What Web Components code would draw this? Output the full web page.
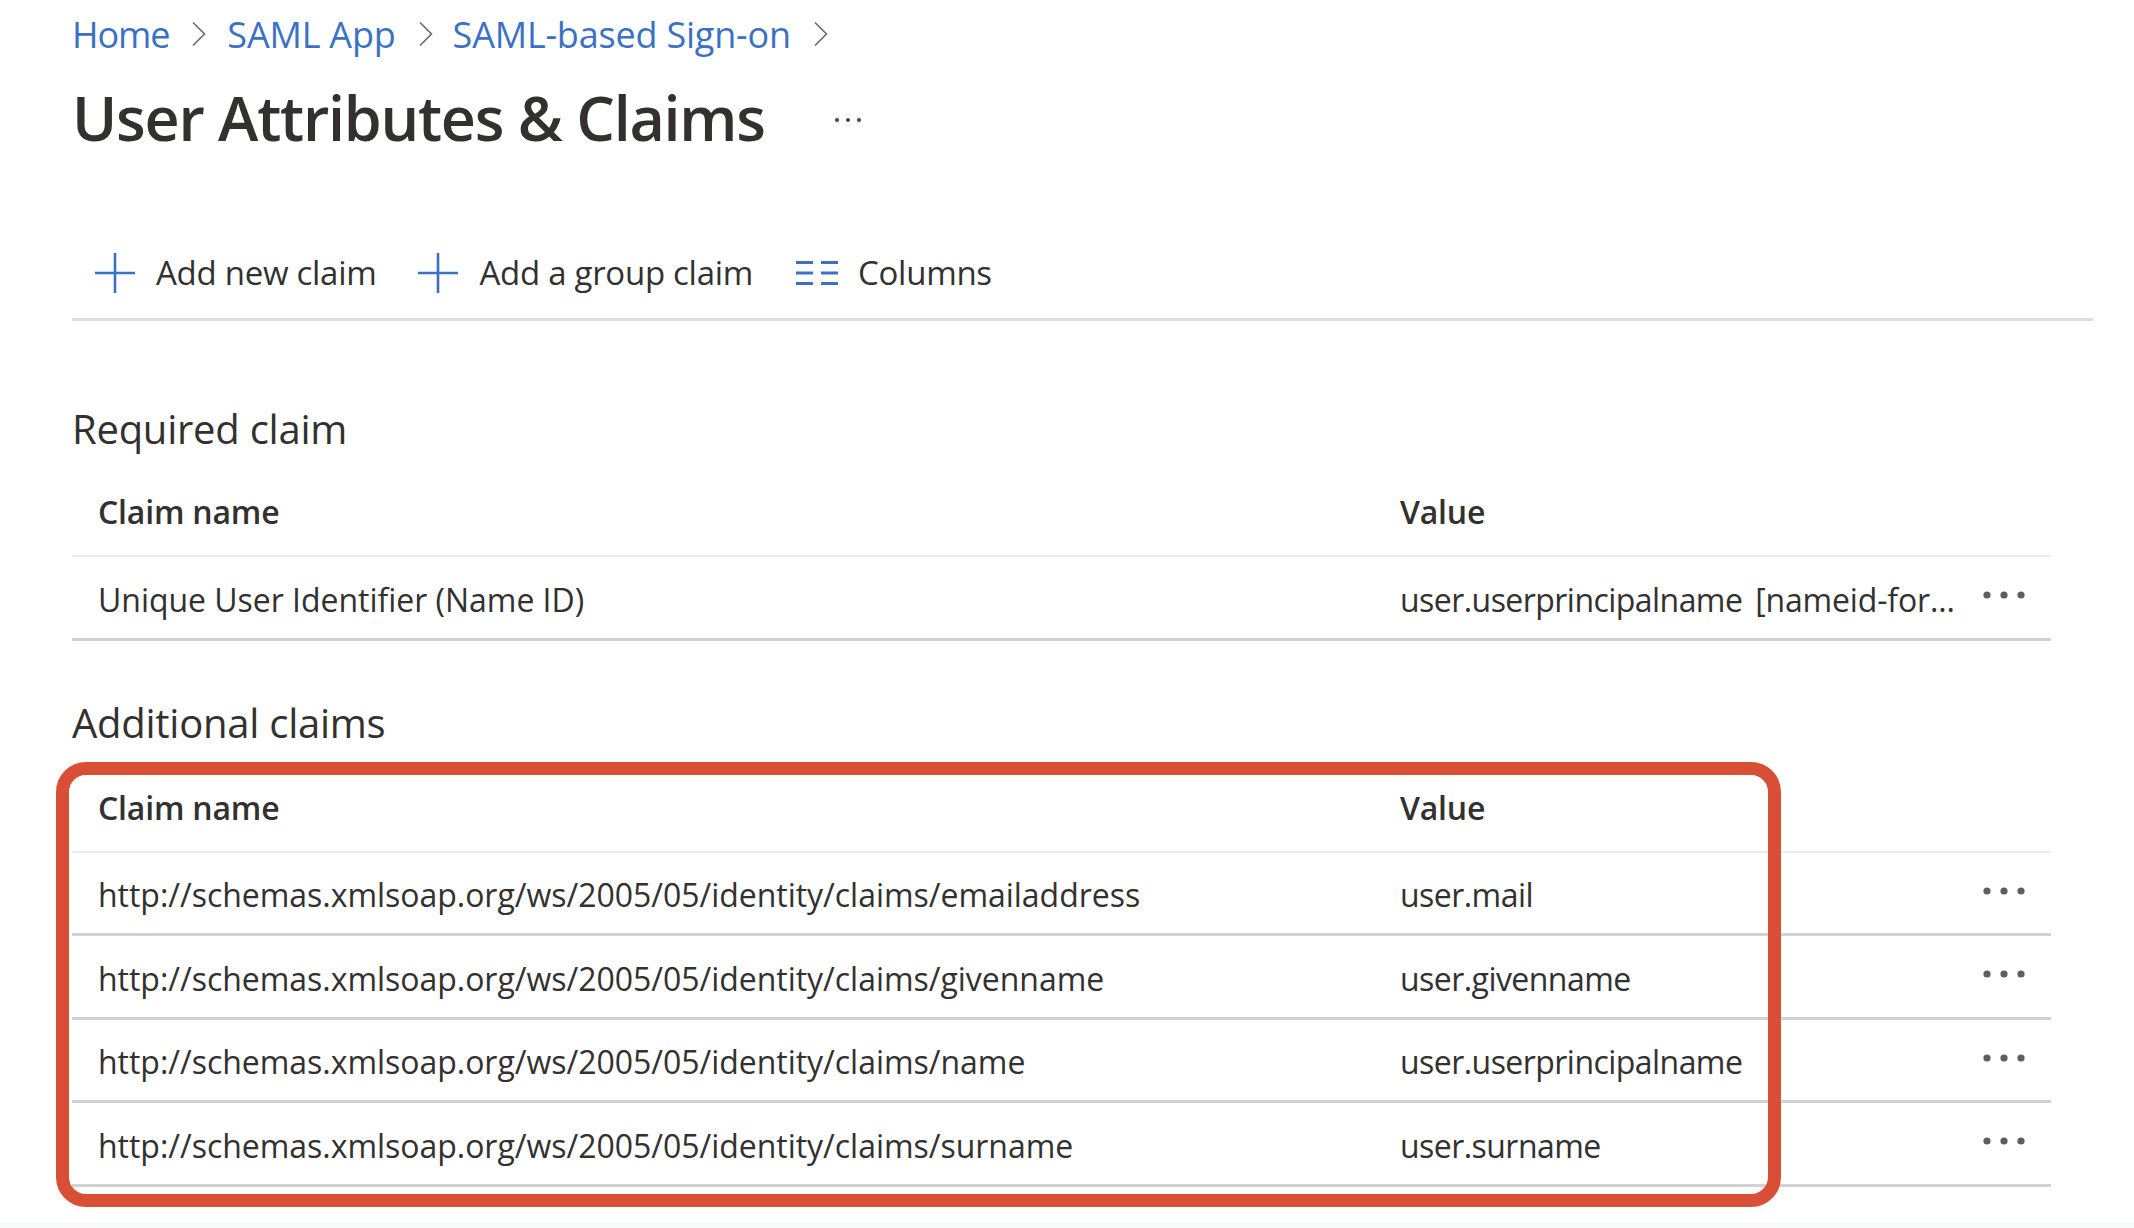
<!DOCTYPE html>
<html lang="en">
<head>
<meta charset="utf-8">
<title>User Attributes & Claims</title>
<style>
  html, body { margin: 0; height: 100%; background: #fff; }
  body { font-family: "Open Sans", "Liberation Sans", sans-serif; color: #323130; }
</style>
</head>
<body>
<claims-page>
  <crumb-trail>
    <crumb-link style="letter-spacing:-1.1px;margin-right:20px">Home</crumb-link>
    <crumb-link>SAML App</crumb-link>
    <crumb-link>SAML-based Sign-on</crumb-link>
  </crumb-trail>
  <page-title>User Attributes &amp; Claims</page-title>
  <tool-bar>
    <tool-button icon="plus" gap="21">Add new claim</tool-button>
    <tool-button icon="plus" gap="21">Add a group claim</tool-button>
    <tool-button icon="columns" gap="20" style="margin-left:1px">Columns</tool-button>
  </tool-bar>
  <section-heading style="height:151px;padding-bottom:18px">Required claim</section-heading>
  <claims-table>
    <claim-row name="Unique User Identifier (Name ID)" value="user.userprincipalname [nameid-for..."></claim-row>
  </claims-table>
  <section-heading style="height:127px;padding-bottom:20px">Additional claims</section-heading>
  <claims-table highlight>
    <claim-row name="http://schemas.xmlsoap.org/ws/2005/05/identity/claims/emailaddress" value="user.mail"></claim-row>
    <claim-row name="http://schemas.xmlsoap.org/ws/2005/05/identity/claims/givenname" value="user.givenname"></claim-row>
    <claim-row name="http://schemas.xmlsoap.org/ws/2005/05/identity/claims/name" value="user.userprincipalname"></claim-row>
    <claim-row name="http://schemas.xmlsoap.org/ws/2005/05/identity/claims/surname" value="user.surname"></claim-row>
  </claims-table>
</claims-page>

<script>
function shadow(el, html) {
  el.attachShadow({ mode: 'open' });
  el.shadowRoot.innerHTML = html;
}

class ClaimsPage extends HTMLElement {
  constructor() {
    super();
    shadow(this, `
      <style>
        :host { display: flex; flex-direction: column; height: 1228px; box-sizing: border-box; }
        main { flex: 1; padding-left: 72px; }
        footer { height: 6px; background: #f8f9fb; }
      </style>
      <main><slot></slot></main>
      <footer></footer>
    `);
  }
}

class CrumbTrail extends HTMLElement {
  constructor() {
    super();
    shadow(this, `
      <style>
        :host { display: flex; height: 68px; align-items: center; }
      </style>
      <slot></slot>
    `);
  }
}

class CrumbLink extends HTMLElement {
  constructor() {
    super();
    shadow(this, `
      <style>
        :host { display: flex; align-items: center; gap: 22px; margin-right: 19px; font-size: 36px; letter-spacing: -0.2px; color: #3a71c6; }
        svg { width: 16px; height: 26px; flex: none; }
      </style>
      <span><slot></slot></span>
      <svg viewBox="0 0 16 26"><path d="M2 1.5 L13.5 13 L2 24.5" fill="none" stroke="#6b6a69" stroke-width="1.6"/></svg>
    `);
  }
}

class PageTitle extends HTMLElement {
  constructor() {
    super();
    shadow(this, `
      <style>
        :host { display: flex; align-items: center; height: 104px; font-size: 61px; font-weight: 600; letter-spacing: -1.25px; color: #323130; }
        span { margin-top: -5px; }
        svg { width: 28px; height: 6px; margin-left: 69px; }
      </style>
      <span><slot></slot></span>
      <svg viewBox="0 0 28 6"><circle cx="3" cy="3" r="2" fill="#444"/><circle cx="14" cy="3" r="2" fill="#444"/><circle cx="25" cy="3" r="2" fill="#444"/></svg>
    `);
  }
}

class ToolBar extends HTMLElement {
  constructor() {
    super();
    shadow(this, `
      <style>
        :host { display: flex; align-items: center; gap: 42px; box-sizing: border-box; height: 149px; width: 2021px; padding: 55px 0 0 23px; border-bottom: 3px solid #dcdcdc; }
      </style>
      <slot></slot>
    `);
  }
}

const TOOL_ICONS = {
  plus: '<svg width="40" height="40" viewBox="0 0 40 40"><path d="M20 0V40M0 20H40" fill="none" stroke="#3a71c6" stroke-width="2.6"/></svg>',
  columns: '<svg width="42" height="24" viewBox="0 0 42 24"><path d="M0 1.5H17M25 1.5H42M0 12H17M25 12H42M0 22.5H17M25 22.5H42" fill="none" stroke="#3a71c6" stroke-width="2.8"/></svg>'
};

class ToolButton extends HTMLElement {
  constructor() {
    super();
    shadow(this, `
      <style>
        :host { display: flex; align-items: center; font-size: 33px; letter-spacing: -0.28px; color: #323130; }
        span { margin-left: var(--gap); }
        svg { display: block; flex: none; }
      </style>
      ${TOOL_ICONS[this.getAttribute('icon')]}
      <span style="--gap:${this.getAttribute('gap')}px"><slot></slot></span>
    `);
  }
}

class SectionHeading extends HTMLElement {
  constructor() {
    super();
    shadow(this, `
      <style>
        :host { display: flex; align-items: flex-end; box-sizing: border-box; font-size: 40px; letter-spacing: -0.25px; color: #323130; }
        span { display: block; line-height: 50px; height: 50px; }
      </style>
      <span><slot></slot></span>
    `);
  }
}

class ClaimsTable extends HTMLElement {
  constructor() {
    super();
    shadow(this, `
      <style>
        :host { display: block; position: relative; width: 1979px; }
        .head { display: grid; grid-template-columns: 1328px 1fr; align-items: center; box-sizing: border-box; height: 85px; padding-bottom: 4px; border-bottom: 2px solid #ebebeb; font-size: 32px; font-weight: 600; letter-spacing: -0.2px; color: #323130; }
        .head span:first-child { padding-left: 26px; }
        .mark { position: absolute; left: -16px; top: -6px; width: 1725px; height: 445px; box-sizing: border-box; border: 13px solid #d94f35; border-radius: 30px; pointer-events: none; }
      </style>
      <div class="head"><span>Claim name</span><span>Value</span></div>
      <slot></slot>
      ${this.hasAttribute('highlight') ? '<div class="mark"></div>' : ''}
    `);
  }
}

class ClaimRow extends HTMLElement {
  constructor() {
    super();
    // anything after the first space in a value gets its own tracking
    const value = this.getAttribute('value').replace(/ (.+)/, ' <span class="tail">$1</span>');
    shadow(this, `
      <style>
        :host { display: grid; grid-template-columns: 1328px 1fr 69px; align-items: center; box-sizing: border-box; height: 83.5px; padding-top: 4px; border-bottom: 3px solid #d2d2d2; font-size: 32px; letter-spacing: -0.55px; color: #323130; }
        .name { padding-left: 26px; white-space: nowrap; letter-spacing: -0.03px; }
        .value { white-space: nowrap; word-spacing: 5px; }
        .tail { letter-spacing: -0.15px; }
        svg { width: 44px; height: 10px; margin-top: -8px; }
      </style>
      <span class="name">${this.getAttribute('name')}</span>
      <span class="value">${value}</span>
      <svg viewBox="0 0 44 10"><circle cx="5" cy="5" r="3.6" fill="#605e5c"/><circle cx="22" cy="5" r="3.6" fill="#605e5c"/><circle cx="39" cy="5" r="3.6" fill="#605e5c"/></svg>
    `);
  }
}

customElements.define('claims-page', ClaimsPage);
customElements.define('crumb-trail', CrumbTrail);
customElements.define('crumb-link', CrumbLink);
customElements.define('page-title', PageTitle);
customElements.define('tool-bar', ToolBar);
customElements.define('tool-button', ToolButton);
customElements.define('section-heading', SectionHeading);
customElements.define('claims-table', ClaimsTable);
customElements.define('claim-row', ClaimRow);
</script>
</body>
</html>
